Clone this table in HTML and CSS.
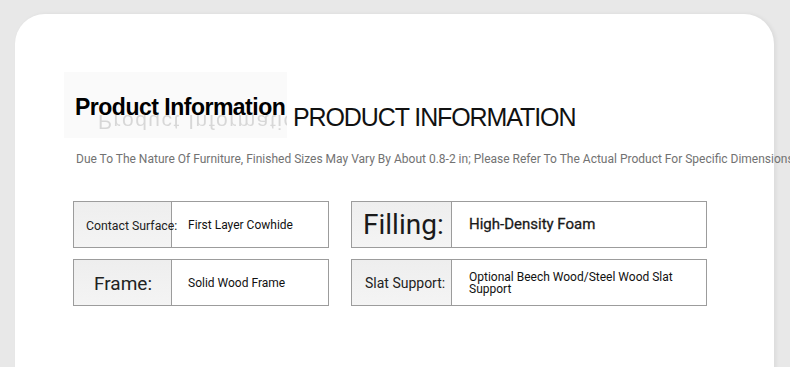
FILE: index.html
```html
<!DOCTYPE html>
<html>
<head>
<meta charset="utf-8">
<link rel="stylesheet" href="styles.css">
</head>
<body>
<div class="card">
  <div class="header">
    <div class="title-img">
      <span class="title-main">Product Information</span>
      <span class="title-reflect" aria-hidden="true">Product Information</span>
    </div>
    <div class="title-en">PRODUCT INFORMATION</div>
  </div>
  <p class="note">Due To The Nature Of Furniture, Finished Sizes May Vary By About 0.8-2 in; Please Refer To The Actual Product For Specific Dimensions</p>
  <div class="spec-grid">
    <div class="spec spec-left">
      <div class="label lbl-contact">Contact Surface:</div>
      <div class="value">First Layer Cowhide</div>
    </div>
    <div class="spec spec-right">
      <div class="label lbl-filling">Filling:</div>
      <div class="value val-big">High-Density Foam</div>
    </div>
    <div class="spec spec-left">
      <div class="label lbl-frame">Frame:</div>
      <div class="value">Solid Wood Frame</div>
    </div>
    <div class="spec spec-right">
      <div class="label lbl-slat">Slat Support:</div>
      <div class="value val-slat">Optional Beech Wood/Steel Wood Slat Support</div>
    </div>
  </div>
</div>
</body>
</html>
```

FILE: styles.css
```css
html, body {
  margin: 0;
  padding: 0;
  background: #e8e8e8;
  overflow: hidden;
  height: 367px;
}
.card {
  margin: 14px 0 0 15px;
  width: 759px;
  height: 420px;
  background: #fff;
  border-radius: 30px;
  box-shadow: 2px 0 4px rgba(0,0,0,0.06);
  padding: 58px 0 0 49px;
  box-sizing: border-box;
  font-family: Roboto, "Liberation Sans", sans-serif;
}
.header {
  display: flex;
  align-items: flex-start;
}
.title-img {
  position: relative;
  width: 223px;
  height: 66px;
  background: #fafafa;
  overflow: hidden;
}
.title-main {
  position: absolute;
  left: 11px;
  top: 22px;
  font-family: "Liberation Sans", Arial, sans-serif;
  font-weight: bold;
  font-size: 23px;
  letter-spacing: -0.5px;
  color: #000;
  z-index: 1;
  white-space: nowrap;
}
.title-reflect {
  position: absolute;
  left: 34px;
  top: 38px;
  font-family: "Liberation Sans", Arial, sans-serif;
  font-size: 21px;
  letter-spacing: 1.5px;
  color: #999;
  transform: scaleY(-1);
  opacity: 0.35;
  filter: blur(0.5px);
  white-space: nowrap;
}
.title-en {
  margin: 31px 0 0 6px;
  font-family: "Liberation Sans", Arial, sans-serif;
  font-size: 25px;
  letter-spacing: -1.1px;
  color: #111;
  white-space: nowrap;
}
.note {
  margin: 14px 0 0 12px;
  font-size: 12px;
  color: #727272;
  letter-spacing: 0;
  white-space: nowrap;
}
.spec-grid {
  margin: 35px 0 0 9px;
  display: grid;
  grid-template-columns: 256px 356px;
  grid-auto-rows: 47px;
  column-gap: 22px;
  row-gap: 11px;
}
.spec {
  display: flex;
  border: 1px solid #9c9c9c;
  box-sizing: border-box;
}
.label {
  background: linear-gradient(to bottom, #eeeeee, #f4f4f4);
  border-right: 1px solid #9c9c9c;
  display: flex;
  align-items: center;
  color: #222;
  white-space: nowrap;
  box-sizing: border-box;
}
.spec-left .label { width: 98px; }
.spec-right .label { width: 100px; }
.lbl-contact { font-size: 12.3px; padding-left: 12px; padding-top: 2px; position: relative; z-index: 1; }
.lbl-frame { font-size: 19px; padding-left: 20px; padding-top: 1px; }
.lbl-filling { font-size: 28px; padding-left: 11px; color: #1a1a1a; }
.lbl-slat { font-size: 14px; padding-left: 13px; }
.value {
  flex: 1;
  display: flex;
  align-items: center;
  font-size: 12px;
  color: #111;
  padding-left: 16px;
  padding-right: 10px;
  line-height: 1;
}
.spec-right .value { padding-left: 17px; }
.val-big { font-size: 15px; font-weight: 400; color: #1a1a1a; -webkit-text-stroke: 0.3px #1a1a1a; }
.val-slat { line-height: 12px; }
```
